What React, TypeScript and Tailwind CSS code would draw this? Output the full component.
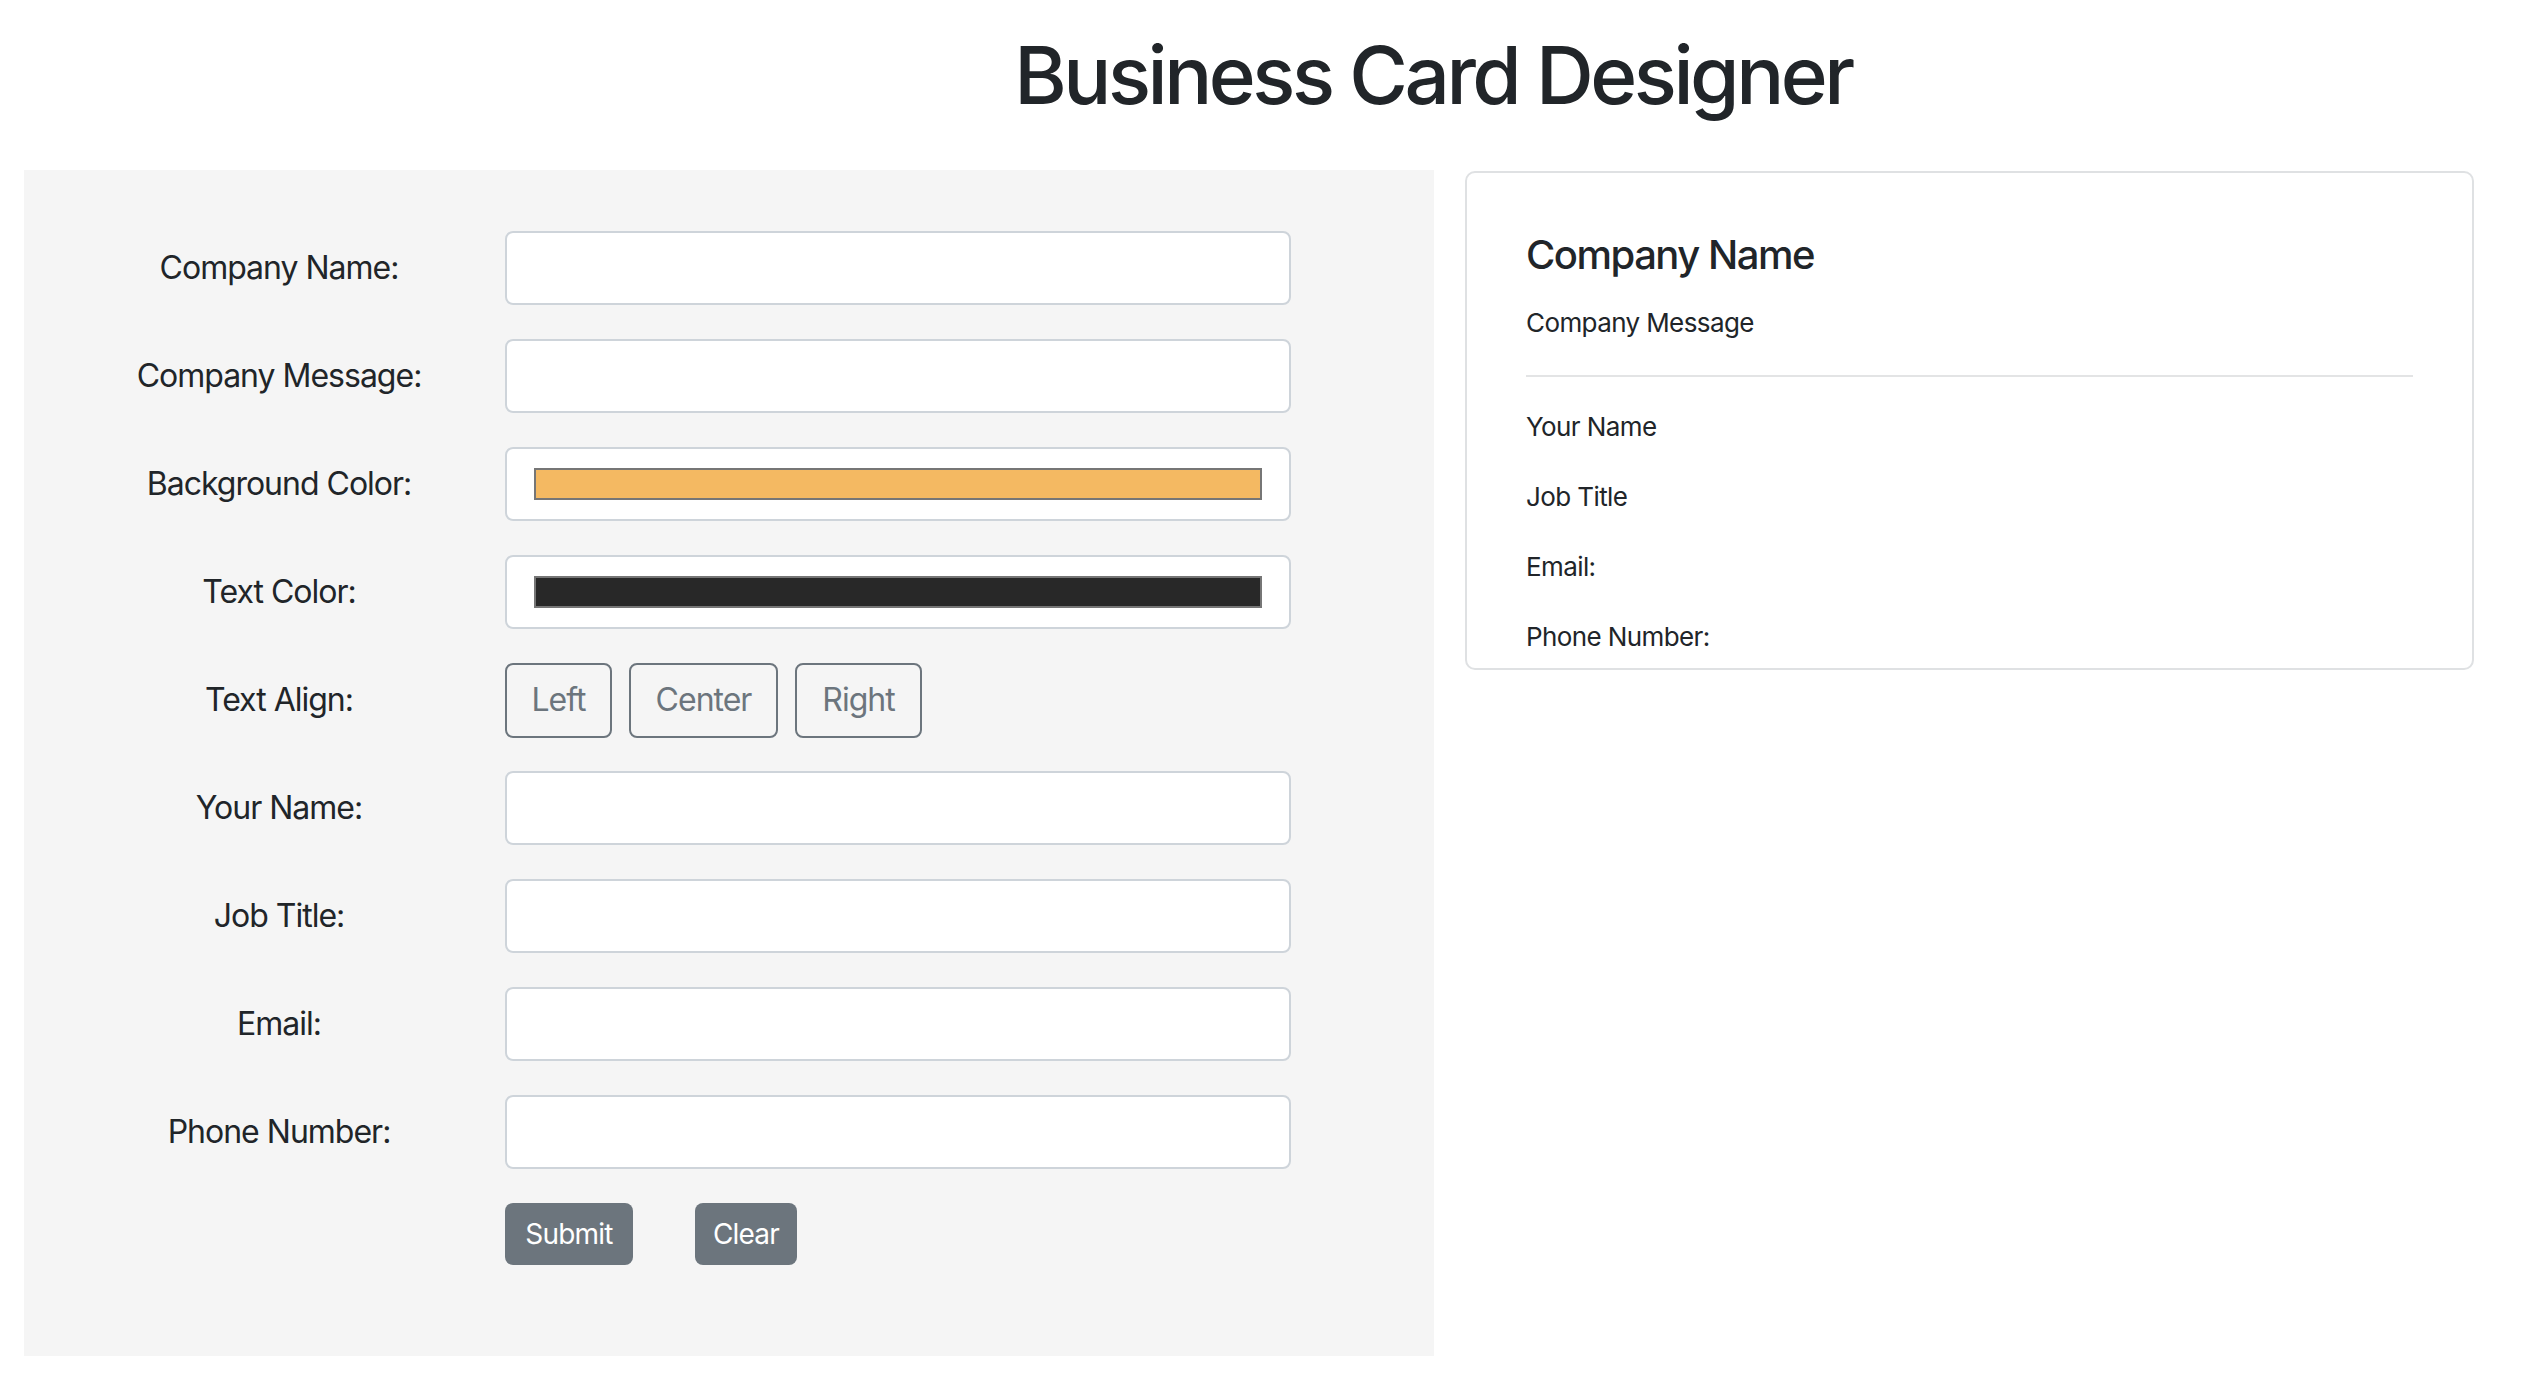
import React from 'react';

const fields = [
  { label: 'Company Name:', kind: 'text' },
  { label: 'Company Message:', kind: 'text' },
  { label: 'Background Color:', kind: 'color', swatch: 'bg-[#f4b962]' },
  { label: 'Text Color:', kind: 'color', swatch: 'bg-[#282828]' },
  { label: 'Text Align:', kind: 'align' },
  { label: 'Your Name:', kind: 'text' },
  { label: 'Job Title:', kind: 'text' },
  { label: 'Email:', kind: 'text' },
  { label: 'Phone Number:', kind: 'text' },
];

function FieldControl({ kind, swatch }: { kind: string; swatch?: string }) {
  if (kind === 'align') {
    return (
      <div className="flex gap-[17px] tracking-[-1px]">
        <button className="w-[107px] h-[75px] rounded-[8px] border-2 border-[#6c757d] text-[#6c757d] text-[32px]">Left</button>
        <button className="w-[149px] h-[75px] rounded-[8px] border-2 border-[#6c757d] text-[#6c757d] text-[32px]">Center</button>
        <button className="w-[127px] h-[75px] rounded-[8px] border-2 border-[#6c757d] text-[#6c757d] text-[32px]">Right</button>
      </div>
    );
  }
  if (kind === 'color') {
    return (
      <div className="w-[786px] h-[74px] rounded-[8px] border-2 border-[#ced4da] bg-white px-[27px] pt-[19px]">
        <div className={`h-[32px] border-2 border-[#767676] ${swatch}`} />
      </div>
    );
  }
  return (
    <input
      type="text"
      className="w-[786px] h-[74px] rounded-[8px] border-2 border-[#ced4da] bg-white px-[24px] text-[32px] outline-none"
    />
  );
}

export default function App() {
  return (
    <div className="min-h-screen bg-white text-[#212529] font-['Inter',sans-serif]">
      {/* Header */}
      <div className="pl-[342px] pt-[27px] text-center">
        <h1 className="text-[80px] font-medium leading-[96px] tracking-[-3.5px]">Business Card Designer</h1>
      </div>

      <div className="flex items-start gap-[31px] pl-[24px] mt-[47px]">
        {/* Form panel */}
        <div className="w-[1410px] bg-[#f5f5f5] pl-[29px] pt-[61px] pb-[91px] flex flex-col gap-[34px]">
          {fields.map((f) => (
            <div key={f.label} className="flex items-center h-[74px]">
              <label className="w-[452px] text-center text-[32px] tracking-[-1px]">{f.label}</label>
              <FieldControl kind={f.kind} swatch={f.swatch} />
            </div>
          ))}
          <div className="flex pl-[452px] gap-[62px] tracking-[-0.8px]">
            <button className="w-[128px] h-[62px] rounded-[8px] bg-[#6c757d] text-white text-[28px]">Submit</button>
            <button className="w-[102px] h-[62px] rounded-[8px] bg-[#6c757d] text-white text-[28px]">Clear</button>
          </div>
        </div>

        {/* Card preview */}
        <div className="w-[1009px] mt-[1px] rounded-[10px] border-2 border-[#dfe1e3] px-[59px] pt-[58px] pb-[12px]">
          <h5 className="text-[40px] font-medium leading-[48px] tracking-[-1.5px]">Company Name</h5>
          <p className="mt-[24px] text-[26px] leading-[39px] tracking-[-0.6px]">Company Message</p>
          <div className="mt-[33px] h-[2px] bg-[#e3e4e5]" />
          <div className="mt-[30px] flex flex-col gap-[31px] text-[26px] leading-[39px] tracking-[-0.6px]">
            <p>Your Name</p>
            <p>Job Title</p>
            <p>Email:</p>
            <p>Phone Number:</p>
          </div>
        </div>
      </div>
    </div>
  );
}
